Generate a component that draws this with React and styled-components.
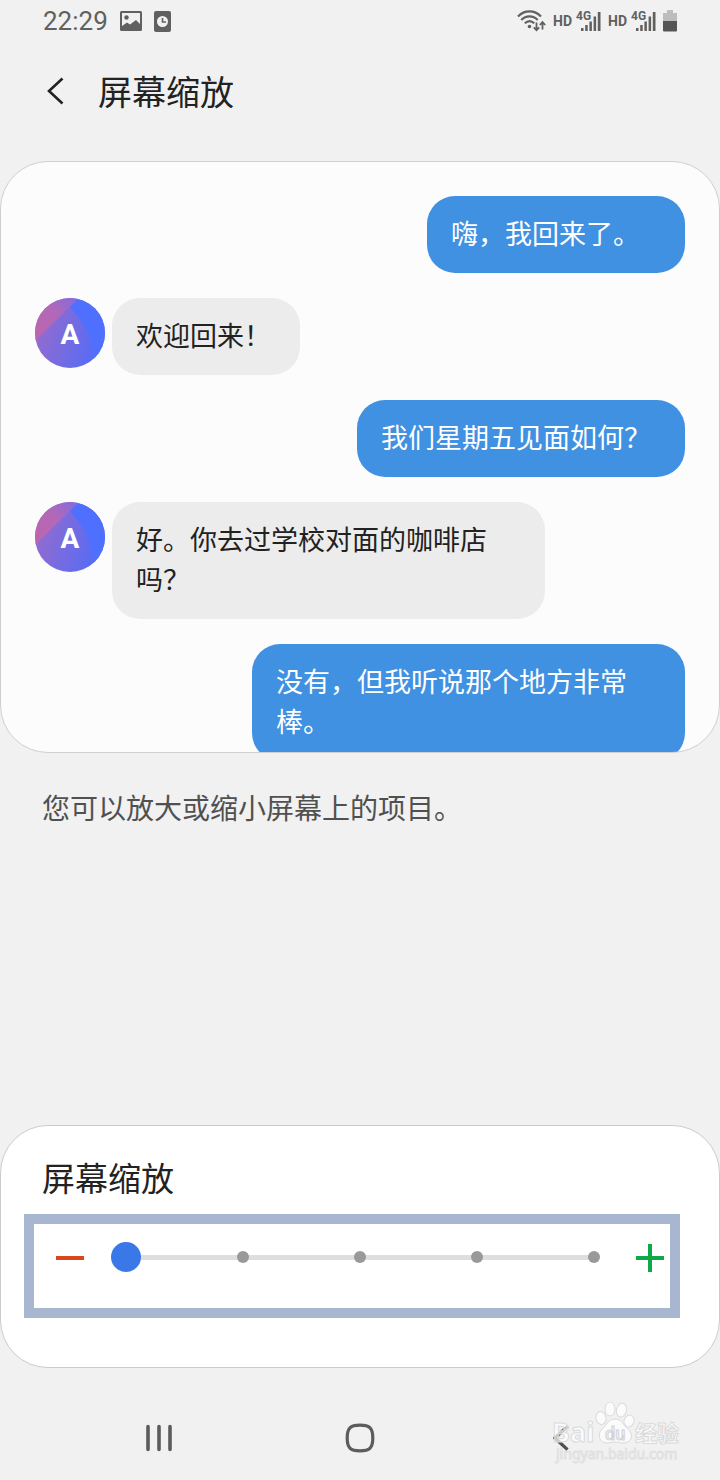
import React, { useState } from "react";
import styled, { createGlobalStyle } from "styled-components";

const GlobalStyle = createGlobalStyle`
  *, *::before, *::after { box-sizing: border-box; }
  body {
    margin: 0;
    background: #f1f1f1;
    color: #222;
    font-family: Roboto, "Noto Sans CJK SC", sans-serif;
  }
`;

const Screen = styled.div`
  display: flex;
  flex-direction: column;
  min-height: 100vh;
`;

const StatusBar = styled.div`
  display: flex;
  justify-content: space-between;
  align-items: center;
  height: 42px;
  padding: 0 43px;
  color: #606060;
`;

const StatusGroup = styled.div`
  display: flex;
  align-items: center;
  gap: ${(p) => p.$gap}px;
`;

const Clock = styled.time`
  font-size: 26px;
  line-height: 32px;
`;

const HdLabel = styled.span`
  font-size: 14px;
  line-height: 20px;
  font-weight: 700;
`;

const Header = styled.header`
  display: flex;
  align-items: center;
  gap: 24px;
  height: 98px;
  margin-bottom: 21px;
  padding: 0 36px;
`;

const IconButton = styled.button`
  display: flex;
  flex: none;
  align-items: center;
  justify-content: center;
  width: ${(p) => p.$size}px;
  height: ${(p) => p.$size}px;
  padding: 0;
  border: 0;
  background: none;
  color: ${(p) => p.$color};
`;

const Title = styled.h1`
  margin: 0;
  padding-top: 4px;
  font-size: 34px;
  line-height: 48px;
  font-weight: 400;
`;

const Preview = styled.section`
  display: flex;
  flex-direction: column;
  gap: 25px;
  height: 592px;
  padding: 34px;
  overflow: hidden;
  border: 1px solid #cfcfcf;
  border-radius: 48px;
  background: #fcfcfc;
`;

const Message = styled.div`
  display: flex;
  flex: none;
  align-items: flex-start;
  justify-content: ${(p) => (p.$mine ? "flex-end" : "flex-start")};
  gap: 7px;
`;

const Bubble = styled.p`
  width: ${(p) => p.$width}px;
  margin: 0;
  padding: 19px 24px 18px;
  border-radius: 28px;
  background: ${(p) => (p.$mine ? "#4091e1" : "#ececec")};
  color: ${(p) => (p.$mine ? "#fff" : "#222")};
  font-size: 27px;
  line-height: 40px;
`;

const Note = styled.p`
  margin: 37px 42px 33px;
  color: #505050;
  font-size: 28px;
  line-height: 40px;
`;

const Panel = styled.section`
  margin-top: auto;
  padding: 30px 39px 49px 23px;
  border: 1px solid #cbcbcb;
  border-radius: 48px;
  background: #fff;
`;

const PanelTitle = styled.label`
  display: block;
  margin: 0 0 10px 18px;
  font-size: 33px;
  line-height: 48px;
`;

const Frame = styled.div`
  display: flex;
  align-items: center;
  gap: 27px;
  padding: 18px 6px 36px 22px;
  border: 10px solid #a9b6cf;
`;

const SliderStack = styled.div`
  display: grid;
  flex: 1;
  align-items: center;
  min-width: 0;

  & > * { grid-area: 1 / 1; }
`;

const Ticks = styled.div`
  display: flex;
  justify-content: space-between;
  padding: 0 9px;
  background: linear-gradient(#dedede, #dedede) center / calc(100% - 30px) 5px no-repeat;
`;

const Tick = styled.span`
  width: 12px;
  height: 12px;
  border-radius: 50%;
  background: #999;
`;

const Range = styled.input`
  width: 100%;
  height: 30px;
  margin: 0;
  appearance: none;
  background: transparent;

  &::-webkit-slider-thumb {
    appearance: none;
    width: 30px;
    height: 30px;
    border: 0;
    border-radius: 50%;
    background: #3b78e7;
  }
`;

const NavBar = styled.nav`
  position: relative;
  display: grid;
  grid-template-columns: repeat(3, 1fr);
  justify-items: center;
  align-items: center;
  height: 84px;
  margin-top: 28px;
  padding: 0 58px;
`;

const Watermark = styled.svg`
  position: absolute;
  right: 36px;
  bottom: 10px;
  pointer-events: none;
`;

const PictureIcon = () => (
  <svg width="22" height="20" viewBox="0 0 22 20">
    <path fill="currentColor" fillRule="evenodd" d="M1.500 0h19A1.500 1.500 0 0 1 22 1.500v17a1.500 1.500 0 0 1-1.500 1.500h-19A1.500 1.500 0 0 1 0 18.500v-17A1.500 1.500 0 0 1 1.500 0zM2 2v13l5-3.500 3 2 6-4.500 4 4V2z" />
    <circle cx="6.500" cy="6.500" r="2.200" fill="currentColor" />
  </svg>
);

const ClockCardIcon = () => (
  <svg width="17" height="21" viewBox="0 0 17 21">
    <rect width="17" height="21" rx="2" fill="currentColor" />
    <circle cx="8.500" cy="10.500" r="5.500" fill="#f1f1f1" />
    <path d="M8.500 7v4h3.500" fill="none" stroke="currentColor" strokeWidth="1.600" />
  </svg>
);

const WifiIcon = () => (
  <svg width="29" height="22" viewBox="0 0 29 22" fill="none" stroke="currentColor" strokeWidth="2.200">
    <path d="M1 6.500C7.500-.3 17.500-.3 24 6.500M4.300 10C9 5.200 16 5.200 20.700 10M7.800 13.300c3-2.800 6.500-2.800 9.500 0" />
    <circle cx="12.500" cy="16.500" r="1.800" fill="currentColor" stroke="none" />
    <path strokeWidth="1.800" d="M19.500 12.500v7.500M16.800 17.300l2.700 2.900 2.700-2.900M25.500 19.500v-7.500M22.800 15l2.700-2.900 2.700 2.900" />
  </svg>
);

const SignalIcon = () => (
  <svg width="25" height="22" viewBox="0 0 25 22" fill="currentColor">
    <text x="0" y="10" fontFamily="Roboto, sans-serif" fontSize="12" fontWeight="700">4G</text>
    <path d="M5 18h2.500v3H5zM9.200 15h2.500v6H9.200zM13.400 11.500h2.500V21h-2.500zM17.600 6.500h2.500V21h-2.500zM21.800 2h2.700v19h-2.700z" />
  </svg>
);

const BatteryIcon = () => (
  <svg width="14" height="22" viewBox="0 0 14 22">
    <path d="M4 0h6v3h4v9H0V3h4z" fill="#bdbdbd" />
    <path d="M0 11h14v9.500a1 1 0 0 1-1 1H1a1 1 0 0 1-1-1z" fill="#565656" />
  </svg>
);

const Chevron = ({ width, height, strokeWidth }) => (
  <svg width={width} height={height} viewBox="0 0 17 28" fill="none" stroke="currentColor" strokeWidth={strokeWidth}>
    <path d="M15.500 1.500L2 14l13.500 12.500" />
  </svg>
);

const Avatar = ({ id }) => (
  <svg width="70" height="70" viewBox="0 0 70 70" role="img" aria-label="A">
    <defs>
      <clipPath id={`clip-${id}`}><circle cx="35" cy="35" r="35" /></clipPath>
      <linearGradient id={`base-${id}`} x1="0" y1="0.400" x2="1" y2="0.700">
        <stop offset="0" stopColor="#966bcd" />
        <stop offset="0.850" stopColor="#5a6cf2" />
      </linearGradient>
      <linearGradient id={`pink-${id}`} x1="0" y1="1" x2="1" y2="0">
        <stop offset="0" stopColor="#bf65ab" />
        <stop offset="0.550" stopColor="#b268b8" />
        <stop offset="1" stopColor="#806be0" />
      </linearGradient>
    </defs>
    <g clipPath={`url(#clip-${id})`}>
      <rect width="70" height="70" fill={`url(#base-${id})`} />
      <path d="M0 0h44L0 43z" fill={`url(#pink-${id})`} />
      <path d="M44 0h26v70H58c3-22-6-42-23-61z" fill="#4f70ff" />
    </g>
    <text x="35" y="46" textAnchor="middle" fill="#fff" fontFamily="Roboto, sans-serif" fontSize="28" fontWeight="700">A</text>
  </svg>
);

const messages = [
  { mine: true, width: 258, text: "嗨，我回来了。" },
  { mine: false, width: 188, text: "欢迎回来！" },
  { mine: true, width: 328, text: "我们星期五见面如何？" },
  { mine: false, width: 433, text: <>好。你去过学校对面的咖啡店<br />吗？</> },
  { mine: true, width: 433, text: <>没有，但我听说那个地方非常<br />棒。</> },
];

export default function App() {
  const [zoom, setZoom] = useState(0);
  const change = (step) => setZoom((z) => Math.min(4, Math.max(0, z + step)));

  return (
    <Screen lang="zh-CN">
      <GlobalStyle />
      <StatusBar>
        <StatusGroup $gap={12}>
          <Clock>22:29</Clock>
          <PictureIcon />
          <ClockCardIcon />
        </StatusGroup>
        <StatusGroup $gap={7}>
          <WifiIcon />
          <StatusGroup $gap={4}>
            <HdLabel>HD</HdLabel>
            <SignalIcon />
          </StatusGroup>
          <StatusGroup $gap={4}>
            <HdLabel>HD</HdLabel>
            <SignalIcon />
          </StatusGroup>
          <BatteryIcon />
        </StatusGroup>
      </StatusBar>

      <Header>
        <IconButton $size={38} $color="#222" aria-label="返回">
          <Chevron width={17} height={28} strokeWidth={2.6} />
        </IconButton>
        <Title>屏幕缩放</Title>
      </Header>

      <Preview>
        {messages.map((m, i) => (
          <Message key={i} $mine={m.mine}>
            {!m.mine && <Avatar id={i} />}
            <Bubble $mine={m.mine} $width={m.width}>{m.text}</Bubble>
          </Message>
        ))}
      </Preview>

      <Note>您可以放大或缩小屏幕上的项目。</Note>

      <Panel>
        <PanelTitle htmlFor="zoom">屏幕缩放</PanelTitle>
        <Frame>
          <IconButton $size={28} $color="#d9481c" aria-label="缩小" onClick={() => change(-1)}>
            <svg width="28" height="30" viewBox="0 0 28 30">
              <path d="M0 16h28" stroke="currentColor" strokeWidth="4" />
            </svg>
          </IconButton>
          <SliderStack>
            <Ticks>
              {[0, 1, 2, 3, 4].map((n) => <Tick key={n} />)}
            </Ticks>
            <Range id="zoom" type="range" min="0" max="4" step="1" value={zoom} onChange={(e) => setZoom(Number(e.target.value))} />
          </SliderStack>
          <IconButton $size={28} $color="#0fa74a" aria-label="放大" onClick={() => change(1)}>
            <svg width="28" height="30" viewBox="0 0 28 30">
              <path d="M0 16h28M14 2v28" stroke="currentColor" strokeWidth="4" />
            </svg>
          </IconButton>
        </Frame>
      </Panel>

      <NavBar>
        <IconButton $size={48} $color="#5c5c5c" aria-label="最近">
          <svg width="28" height="28" viewBox="0 0 28 28" stroke="currentColor" strokeWidth="3.600" strokeLinecap="round">
            <path d="M3 2.500v23M14 2.500v23M25 2.500v23" />
          </svg>
        </IconButton>
        <IconButton $size={48} $color="#5c5c5c" aria-label="主页">
          <svg width="30" height="30" viewBox="0 0 30 30" fill="none" stroke="currentColor" strokeWidth="3.200">
            <path d="M15 2.200c9.800 0 12.800 3 12.800 12.800s-3 12.800-12.800 12.800S2.200 24.800 2.200 15 5.200 2.200 15 2.200z" />
          </svg>
        </IconButton>
        <IconButton $size={48} $color="#505050" aria-label="返回">
          <Chevron width={16} height={26} strokeWidth={3.6} />
        </IconButton>
        <Watermark width="132" height="68" viewBox="0 0 132 68" fill="#fff" fillOpacity="0.700" stroke="#dadada" strokeWidth="1">
          <g fontFamily="Roboto, 'Noto Sans CJK SC', sans-serif" fontWeight="700">
            <text x="0" y="40" fontSize="27" fontFamily="'Noto Sans', sans-serif">Bai</text>
            <text x="83" y="39" fontSize="22">经验</text>
            <text x="4" y="57" fontSize="14" fontWeight="400" fontFamily="'Noto Sans', sans-serif" stroke="#e0e0e0">jingyan.baidu.com</text>
          </g>
          <ellipse cx="49" cy="16" rx="5" ry="6.500" transform="rotate(-15 49 16)" />
          <ellipse cx="58" cy="7" rx="5" ry="7" />
          <ellipse cx="69.500" cy="8" rx="5" ry="7" transform="rotate(12 69 8)" />
          <ellipse cx="77" cy="19" rx="5" ry="6" transform="rotate(20 77 19)" />
          <path d="M63 17c7 0 8 6 13 10 6 5 4 14-5 14-4 0-5-1-8-1s-5 1-8 1c-8 0-10-9-5-14 5-4 6-10 13-10z" />
          <text x="53" y="38" fontSize="18" fontFamily="Roboto, sans-serif" fontWeight="500" fill="#f1f1f1" stroke="#d2d2d2">du</text>
        </Watermark>
      </NavBar>
    </Screen>
  );
}
